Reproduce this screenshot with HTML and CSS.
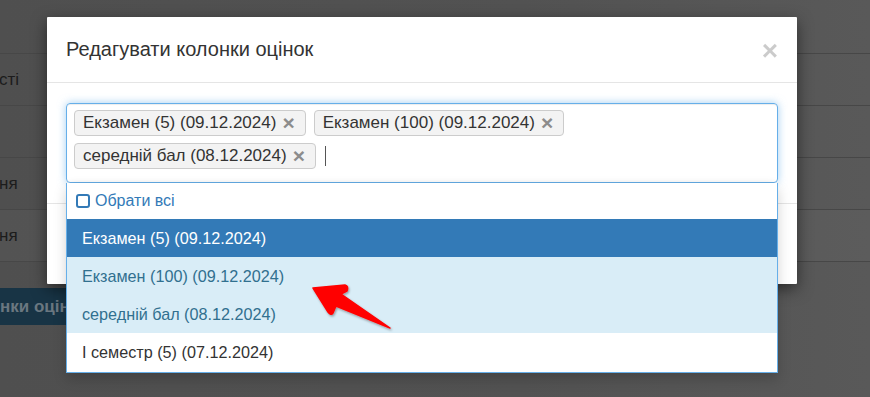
FILE: index.html
```html
<!DOCTYPE html>
<html lang="uk">
<head>
<meta charset="utf-8">
<link rel="stylesheet" href="styles.css">
</head>
<body>
<div class="page">
  <div class="row row-head"></div>
  <div class="row"><span class="cell">сті</span></div>
  <div class="row"></div>
  <div class="row"><span class="cell">ня</span></div>
  <div class="row row-striped"><span class="cell">ня</span></div>
  <div class="btn-row"><span class="bg-btn">нки оцінок</span></div>
</div>

<div class="modal">
  <div class="modal-header">
    <h4 class="modal-title">Редагувати колонки оцінок</h4>
    <span class="close">×</span>
  </div>
  <div class="modal-body">
    <div class="select-wrap">
      <div class="select">
        <span class="tag"><span class="tag-text">Екзамен (5) (09.12.2024)</span><b class="tag-x">×</b></span>
        <span class="tag"><span class="tag-text">Екзамен (100) (09.12.2024)</span><b class="tag-x">×</b></span>
        <span class="tag"><span class="tag-text">середній бал (08.12.2024)</span><b class="tag-x">×</b></span>
        <span class="caret"></span>
      </div>
      <div class="dropdown">
        <div class="select-all"><span class="chk"></span>Обрати всі</div>
        <div class="opt opt-active">Екзамен (5) (09.12.2024)</div>
        <div class="opt opt-sel">Екзамен (100) (09.12.2024)</div>
        <div class="opt opt-sel">середній бал (08.12.2024)</div>
        <div class="opt">I семестр (5) (07.12.2024)</div>
      </div>
    </div>
  </div>
  <div class="modal-footer"></div>
</div>

<svg class="arrow" width="870" height="397" viewBox="0 0 870 397">
  <defs>
    <filter id="sh" x="-20%" y="-20%" width="140%" height="140%">
      <feDropShadow dx="1" dy="1.5" stdDeviation="1" flood-color="#000" flood-opacity="0.35"/>
    </filter>
  </defs>
  <path filter="url(#sh)" fill="#f00" stroke="#f00" stroke-width="1.5" stroke-linejoin="round"
    d="M313 288 L345 285 Q349 286 347 291 L341 294 L390 328 L336 306 L333 313 Q331 316 328 312 Z"/>
</svg>
</body>
</html>
```

FILE: styles.css
```css
html, body {
  margin: 0;
  padding: 0;
}
body {
  width: 870px;
  height: 397px;
  overflow: hidden;
  position: relative;
  background: linear-gradient(90deg, #4f4f4f 0%, #525252 60%, #595959 100%);
  font-family: "Liberation Sans", Arial, sans-serif;
  color: #333;
}

/* underlying page (dimmed by backdrop) */
.page {
  display: flex;
  flex-direction: column;
}
.row {
  height: 51px;
  border-bottom: 1px solid #474747;
  display: flex;
  align-items: center;
}
.row-head {
  height: 53px;
}
.row-striped {
  background: rgba(255, 255, 255, 0.025);
}
.cell {
  font-size: 17px;
  color: #1c1c1c;
  margin-left: -1px;
}
.btn-row {
  margin-top: 26px;
  display: flex;
}
.bg-btn {
  display: block;
  width: 200px;
  height: 37px;
  line-height: 37px;
  background: #183445;
  color: #6a7780;
  font-weight: bold;
  font-size: 17px;
  white-space: nowrap;
  overflow: hidden;
}

/* modal */
.modal {
  position: absolute;
  left: 47px;
  top: 17px;
  width: 750px;
  background: #fff;
  box-shadow: 0 5px 15px rgba(0, 0, 0, 0.5);
  border-radius: 1px;
}
.modal-header {
  height: 66px;
  box-sizing: border-box;
  padding: 18px 20px 0 19px;
  border-bottom: 1px solid #e5e5e5;
  display: flex;
  justify-content: space-between;
  align-items: flex-start;
}
.modal-title {
  margin: 0;
  font-size: 20px;
  font-weight: normal;
  line-height: 28px;
  color: #333;
}
.close {
  font-size: 28px;
  font-weight: bold;
  line-height: 28px;
  color: #000;
  opacity: 0.2;
  margin-top: 2px;
  margin-right: -1px;
}
.modal-body {
  padding: 20px 19px 20px 19px;
}
.select-wrap {
  position: relative;
}
.select {
  height: 80px;
  box-sizing: border-box;
  border: 1px solid #66afe9;
  border-radius: 4px;
  box-shadow: inset 0 1px 1px rgba(0, 0, 0, 0.075), 0 0 8px rgba(102, 175, 233, 0.6);
  padding: 6px 7px;
  display: flex;
  flex-wrap: wrap;
  align-content: flex-start;
  align-items: center;
  column-gap: 8px;
  row-gap: 7px;
}
.tag {
  height: 26px;
  box-sizing: border-box;
  border: 1px solid #cccccc;
  border-radius: 4px;
  background: #f3f3f3;
  padding: 0 10px 0 8px;
  display: flex;
  align-items: center;
  font-size: 17px;
  color: #333;
  white-space: nowrap;
}
.tag-text {
  line-height: 24px;
}
.tag-x {
  color: #8c8c8c;
  font-size: 21px;
  line-height: 24px;
  margin-left: 6px;
}
.caret {
  width: 1px;
  height: 20px;
  background: #555;
  margin-left: 1px;
}
.dropdown {
  position: absolute;
  left: 0;
  right: 0;
  top: 80px;
  background: #fff;
  border: 1px solid #66afe9;
  border-top: none;
  box-shadow: 0 -4px 6px -4px rgba(0, 0, 0, 0.08), 0 6px 12px rgba(0, 0, 0, 0.175);
  z-index: 2;
}
.select-all {
  height: 36px;
  display: flex;
  align-items: center;
  padding-left: 9px;
  font-size: 16px;
  color: #337ab7;
}
.chk {
  width: 10px;
  height: 10px;
  border: 2.5px solid #337ab7;
  border-radius: 3px;
  margin-right: 5px;
}
.opt {
  height: 38px;
  line-height: 38px;
  padding-left: 15px;
  font-size: 16.2px;
  color: #333;
}
.opt:last-child {
  height: 39px;
}
.opt-active {
  background: #337ab7;
  color: #fff;
}
.opt-sel {
  background: #d9edf7;
  color: #31708f;
}
.modal-footer {
  height: 81px;
  border-top: 1px solid #e5e5e5;
  box-sizing: border-box;
}

.arrow {
  position: absolute;
  left: 0;
  top: 0;
  z-index: 5;
  pointer-events: none;
}
```
